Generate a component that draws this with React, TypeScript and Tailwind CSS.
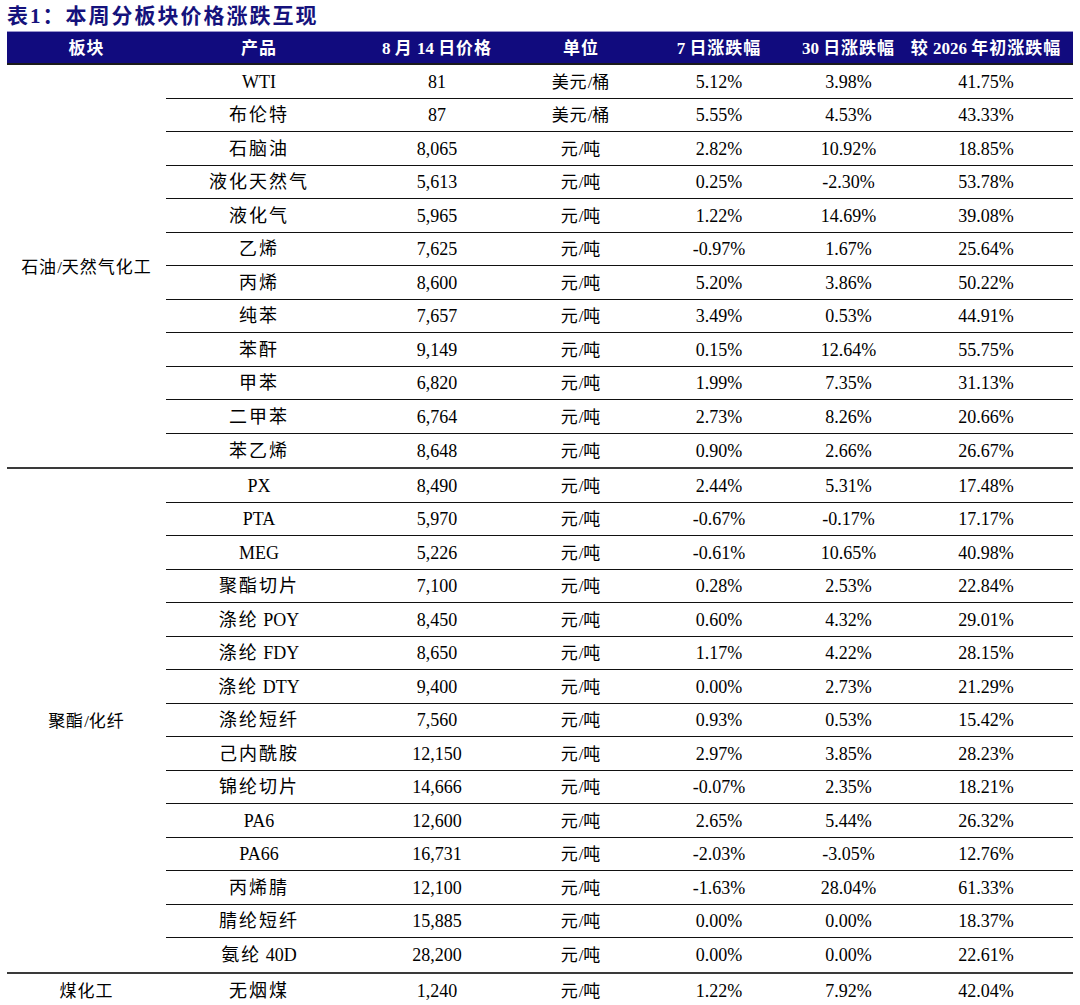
import React from "react"

type Row = [string, string, string, string, string, string]

const groups: { name: string; rows: Row[] }[] = [
  {
    name: "石油/天然气化工",
    rows: [
      ["WTI", "81", "美元/桶", "5.12%", "3.98%", "41.75%"],
      ["布伦特", "87", "美元/桶", "5.55%", "4.53%", "43.33%"],
      ["石脑油", "8,065", "元/吨", "2.82%", "10.92%", "18.85%"],
      ["液化天然气", "5,613", "元/吨", "0.25%", "-2.30%", "53.78%"],
      ["液化气", "5,965", "元/吨", "1.22%", "14.69%", "39.08%"],
      ["乙烯", "7,625", "元/吨", "-0.97%", "1.67%", "25.64%"],
      ["丙烯", "8,600", "元/吨", "5.20%", "3.86%", "50.22%"],
      ["纯苯", "7,657", "元/吨", "3.49%", "0.53%", "44.91%"],
      ["苯酐", "9,149", "元/吨", "0.15%", "12.64%", "55.75%"],
      ["甲苯", "6,820", "元/吨", "1.99%", "7.35%", "31.13%"],
      ["二甲苯", "6,764", "元/吨", "2.73%", "8.26%", "20.66%"],
      ["苯乙烯", "8,648", "元/吨", "0.90%", "2.66%", "26.67%"],
    ],
  },
  {
    name: "聚酯/化纤",
    rows: [
      ["PX", "8,490", "元/吨", "2.44%", "5.31%", "17.48%"],
      ["PTA", "5,970", "元/吨", "-0.67%", "-0.17%", "17.17%"],
      ["MEG", "5,226", "元/吨", "-0.61%", "10.65%", "40.98%"],
      ["聚酯切片", "7,100", "元/吨", "0.28%", "2.53%", "22.84%"],
      ["涤纶 POY", "8,450", "元/吨", "0.60%", "4.32%", "29.01%"],
      ["涤纶 FDY", "8,650", "元/吨", "1.17%", "4.22%", "28.15%"],
      ["涤纶 DTY", "9,400", "元/吨", "0.00%", "2.73%", "21.29%"],
      ["涤纶短纤", "7,560", "元/吨", "0.93%", "0.53%", "15.42%"],
      ["己内酰胺", "12,150", "元/吨", "2.97%", "3.85%", "28.23%"],
      ["锦纶切片", "14,666", "元/吨", "-0.07%", "2.35%", "18.21%"],
      ["PA6", "12,600", "元/吨", "2.65%", "5.44%", "26.32%"],
      ["PA66", "16,731", "元/吨", "-2.03%", "-3.05%", "12.76%"],
      ["丙烯腈", "12,100", "元/吨", "-1.63%", "28.04%", "61.33%"],
      ["腈纶短纤", "15,885", "元/吨", "0.00%", "0.00%", "18.37%"],
      ["氨纶 40D", "28,200", "元/吨", "0.00%", "0.00%", "22.61%"],
    ],
  },
  {
    name: "煤化工",
    rows: [["无烟煤", "1,240", "元/吨", "1.22%", "7.92%", "42.04%"]],
  },
]

const headers = ["板块", "产品", "8 月 14 日价格", "单位", "7 日涨跌幅", "30 日涨跌幅", "较 2026 年初涨跌幅"]
const cols = "grid grid-cols-[186px_170px_118px_158px_101px_174px]"

// CJK runs get letter spacing, latin runs don't
function Mixed({ text, cjk }: { text: string; cjk: string }) {
  const parts = text.split(/([\u3400-\u9fff]+)/).filter(Boolean)
  return (
    <>
      {parts.map((p, i) =>
        /[\u3400-\u9fff]/.test(p) ? (
          <span key={i} className={cjk}>
            {p}
          </span>
        ) : (
          <span key={i}>{p}</span>
        ),
      )}
    </>
  )
}

export default function App() {
  return (
    <div className="w-[1080px] h-[1005px] bg-white overflow-hidden text-black [font-family:'Liberation_Serif','Noto_Sans_CJK_SC',serif]">
      <div className="h-[31px] pl-[7px] pt-[3px] text-[21px] leading-[26px] font-bold tracking-[2px] text-[#15127c]">
        表1：本周分板块价格涨跌互现
      </div>
      <div className="mx-[7px] w-[1066px]">
        <div className="flex h-[34px] pt-[3px] items-center bg-[#110b7e] border-t border-[#9a94cc] border-b-2 border-b-[#1b1b1b] text-white text-[17px] font-bold">
          <div className="w-[159px] text-center whitespace-nowrap">
            <Mixed text={headers[0]} cjk="tracking-[1px]" />
          </div>
          <div className={cols + " flex-1"}>
            {headers.slice(1).map((h) => (
              <div key={h} className="text-center whitespace-nowrap">
                <Mixed text={h} cjk="tracking-[1px]" />
              </div>
            ))}
          </div>
        </div>
        {groups.map((g, gi) => (
          <div
            key={g.name}
            className={
              "flex " +
              (gi === groups.length - 1 ? "border-b-[3px] border-[#505050]" : "border-b-2 border-[#3a3a3a]")
            }
          >
            <div className="w-[159px] pt-[3px] flex items-center justify-center text-[17px] whitespace-nowrap">
              <Mixed text={g.name} cjk="tracking-[1px]" />
            </div>
            <div className="flex-1">
              {g.rows.map((r, ri) => (
                <div
                  key={r[0]}
                  className={
                    cols +
                    " h-[33.5px] pt-[2px] items-center text-[18px] " +
                    (ri < g.rows.length - 1 ? "border-b border-[#111]" : "")
                  }
                >
                  <div className="text-center whitespace-nowrap">
                    <Mixed text={r[0]} cjk="tracking-[2px]" />
                  </div>
                  <div className="text-center">{r[1]}</div>
                  <div className="text-center text-[17px]">
                    <Mixed text={r[2]} cjk="tracking-[1px]" />
                  </div>
                  <div className="text-center">{r[3]}</div>
                  <div className="text-center">{r[4]}</div>
                  <div className="text-center">{r[5]}</div>
                </div>
              ))}
            </div>
          </div>
        ))}
      </div>
    </div>
  )
}
